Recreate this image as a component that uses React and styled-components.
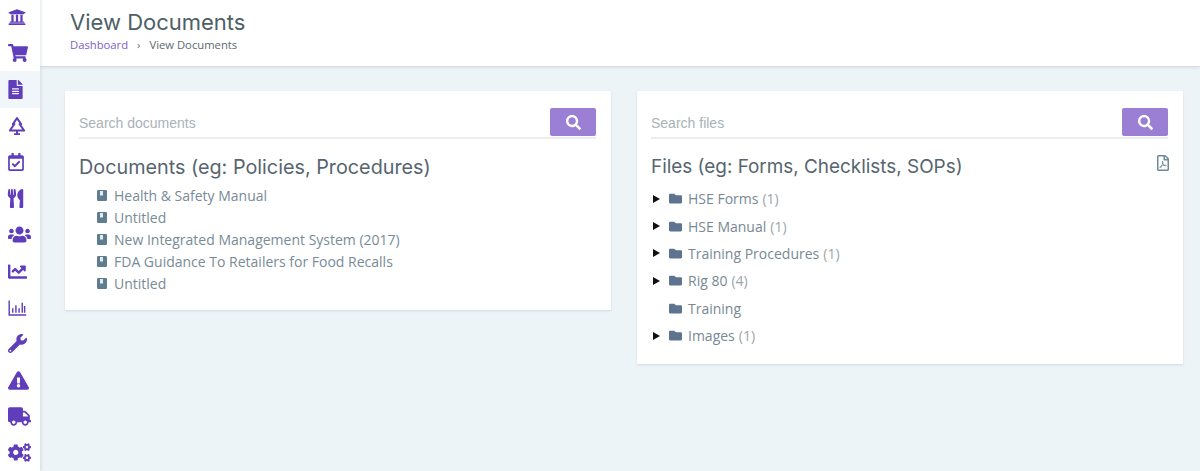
import React from 'react';
import styled, { createGlobalStyle } from 'styled-components';
import {
  FaUniversity, FaShoppingCart, FaFileAlt, FaRegCalendarCheck, FaUtensils, FaUsers, FaChartLine,
  FaWrench, FaExclamationTriangle, FaTruck, FaCogs, FaSearch, FaFolder, FaRegFilePdf,
} from 'react-icons/fa';

const HEADING_FONT = `Inter, "Open Sans", sans-serif`;
const BODY_FONT = `"Open Sans", "Liberation Sans", sans-serif`;

const TreeIcon = (props) => (
  <svg viewBox="0 0 24 24" width="1em" height="1em" fill="none" stroke="currentColor" strokeWidth="2.6" strokeLinejoin="round" {...props}>
    <path d="M12 1.5 L17.5 9.5 H15.5 L21.5 18 H2.5 L8.5 9.5 H6.5 Z" />
    <path d="M8 22.8 H16 M12 18 V22.8" />
  </svg>
);

const BarsIcon = (props) => (
  <svg viewBox="0 0 24 24" width="1em" height="1em" fill="none" stroke="currentColor" {...props}>
    <path d="M1.5 3 V21.5 H23" strokeWidth="1.8" />
    <path d="M6 18.5 V13 M10 18.5 V9 M14 18.5 V13 M18 18.5 V6 M21 18.5 V10" strokeWidth="1.8" />
  </svg>
);

const BookIcon = (props) => (
  <svg viewBox="0 0 10 11" width="10" height="11" {...props}>
    <rect x="0" y="0" width="10" height="11" rx="1.2" fill="currentColor" />
    <rect x="3" y="1" width="3" height="4.5" fill="#e4ebef" />
  </svg>
);

const navItems = [
  { icon: FaUniversity, size: 18 },
  { icon: FaShoppingCart, size: 20 },
  { icon: FaFileAlt, size: 19, offset: -2, active: true },
  { icon: TreeIcon, size: 18 },
  { icon: FaRegCalendarCheck, size: 18, offset: -1 },
  { icon: FaUtensils, size: 19, offset: -2 },
  { icon: FaUsers, size: 23 },
  { icon: FaChartLine, size: 19 },
  { icon: BarsIcon, size: 19 },
  { icon: FaWrench, size: 19 },
  { icon: FaExclamationTriangle, size: 21 },
  { icon: FaTruck, size: 23 },
  { icon: FaCogs, size: 23 },
];

const documents = [
  'Health & Safety Manual',
  'Untitled',
  'New Integrated Management System (2017)',
  'FDA Guidance To Retailers for Food Recalls',
  'Untitled',
];

const files = [
  { name: 'HSE Forms', count: 1 },
  { name: 'HSE Manual', count: 1 },
  { name: 'Training Procedures', count: 1 },
  { name: 'Rig 80', count: 4 },
  { name: 'Training' },
  { name: 'Images', count: 1 },
];

const App = () => {
  return (
    <>
      <GlobalStyle />
      <Page>
        <Sidebar>
          {navItems.map(({ icon: Icon, size, offset, active }, idx) => (
            <NavItem key={idx} $active={active} $size={size} $offset={offset}>
              <Icon />
            </NavItem>
          ))}
        </Sidebar>
        <Main>
          <Header>
            <Title>View Documents</Title>
            <Breadcrumb>
              <CrumbLink>Dashboard</CrumbLink>
              <CrumbSep>›</CrumbSep>
              <span>View Documents</span>
            </Breadcrumb>
          </Header>
          <Content>
            <Card>
              <SearchRow>
                <SearchInput placeholder="Search documents" />
                <SearchButton><FaSearch /></SearchButton>
              </SearchRow>
              <CardTitle $size={19.8}>Documents (eg: Policies, Procedures)</CardTitle>
              <DocList>
                {documents.map((doc, idx) => (
                  <DocRow key={idx}>
                    <BookIcon />
                    {doc}
                  </DocRow>
                ))}
              </DocList>
            </Card>
            <Card>
              <SearchRow>
                <SearchInput placeholder="Search files" />
                <SearchButton><FaSearch /></SearchButton>
              </SearchRow>
              <TitleRow>
                <CardTitle $size={18.9}>Files (eg: Forms, Checklists, SOPs)</CardTitle>
                <PdfLink><FaRegFilePdf /></PdfLink>
              </TitleRow>
              <FileList>
                {files.map((file) => (
                  <FileRow key={file.name}>
                    <Arrow $hidden={file.count === undefined} />
                    <FaFolder />
                    {file.name}
                    {file.count !== undefined && <Count>({file.count})</Count>}
                  </FileRow>
                ))}
              </FileList>
            </Card>
          </Content>
        </Main>
      </Page>
    </>
  );
};

const GlobalStyle = createGlobalStyle`
  * { box-sizing: border-box; }
  html, body { margin: 0; height: 100%; overflow: hidden; }
  body { background: #edf4f8; font-family: ${BODY_FONT}; }
  #root { height: 100%; }
`;

const Page = styled.div`
  display: flex;
  height: 471px;
  overflow: hidden;
`;

const Sidebar = styled.nav`
  width: 40px;
  flex-shrink: 0;
  background: #fff;
  box-shadow: 1px 0 3px rgba(90, 120, 140, 0.2);
  display: flex;
  flex-direction: column;
  margin-top: -1.5px;
  z-index: 2;
`;

const NavItem = styled.div`
  height: 36.35px;
  flex-shrink: 0;
  display: flex;
  align-items: center;
  padding-left: 8px;
  color: #5f3dbb;
  background: ${props => props.$active ? '#f0f6fa' : 'transparent'};
  font-size: ${props => props.$size}px;
  svg { margin-left: ${props => props.$offset || 0}px; }
`;

const Main = styled.div`
  flex: 1;
  min-width: 0;
  display: flex;
  flex-direction: column;
`;

const Header = styled.header`
  height: 66px;
  background: #fff;
  box-shadow: 0 1px 3px rgba(90, 120, 140, 0.25);
  padding: 10px 30px 0;
`;

const Title = styled.h1`
  margin: 0;
  font-family: ${HEADING_FONT};
  font-weight: 400;
  font-size: 22px;
  line-height: 24px;
  color: #4d6066;
`;

const Breadcrumb = styled.div`
  display: flex;
  align-items: center;
  margin-top: 3px;
  font-size: 11.25px;
  line-height: 16px;
  color: #5c6b70;
`;

const CrumbLink = styled.span`
  color: #7d62c6;
`;

const CrumbSep = styled.span`
  margin: 0 9px;
`;

const Content = styled.div`
  display: grid;
  grid-template-columns: 546px 546px;
  gap: 26px;
  align-items: start;
  padding: 25px 0 0 25px;
`;

const Card = styled.section`
  background: #fff;
  padding: 17px 15px 15px 14px;
  box-shadow: 0 1px 2px rgba(110, 140, 160, 0.25);
`;

const SearchRow = styled.div`
  display: flex;
  align-items: flex-end;
  justify-content: space-between;
  height: 31px;
  border-bottom: 2px solid #e9edef;
`;

const SearchInput = styled.input`
  flex: 1;
  border: none;
  outline: none;
  background: transparent;
  font-family: "Liberation Sans", Arial, sans-serif;
  font-size: 14px;
  height: 28px;
  padding: 0;
  &::placeholder { color: #a9b2b8; opacity: 1; }
`;

const SearchButton = styled.button`
  width: 46px;
  height: 28px;
  margin-bottom: 1px;
  border: none;
  border-radius: 2px;
  background: #9b7fd4;
  color: #fff;
  font-size: 15px;
  display: flex;
  align-items: center;
  justify-content: center;
  padding: 0;
`;

const TitleRow = styled.div`
  display: flex;
  justify-content: space-between;
  align-items: flex-start;
`;

const CardTitle = styled.h2`
  margin: 13.5px 0 0;
  font-family: ${HEADING_FONT};
  font-weight: 400;
  font-size: ${props => props.$size}px;
  line-height: 28px;
  color: #56656f;
`;

const PdfLink = styled.span`
  margin-top: 16px;
  margin-right: -3px;
  color: #6f8a96;
  font-size: 16px;
  display: flex;
`;

const DocList = styled.div`
  margin-top: 4px;
  padding-left: 18px;
`;

const DocRow = styled.div`
  display: flex;
  align-items: center;
  gap: 7px;
  height: 22px;
  font-size: 14px;
  color: #788b96;
  svg { color: #5f7d8e; }
`;

const FileList = styled.div`
  margin-top: 4.5px;
`;

const FileRow = styled.div`
  display: flex;
  align-items: center;
  height: 27.4px;
  font-size: 14px;
  color: #788894;
  svg { width: 13px; height: 13px; color: #5d7390; margin-right: 6px; }
`;

const Arrow = styled.span`
  width: 7px;
  height: 8px;
  margin: 0 9px 0 2px;
  border-left: 7px solid #111;
  border-top: 4px solid transparent;
  border-bottom: 4px solid transparent;
  visibility: ${props => props.$hidden ? 'hidden' : 'visible'};
`;

const Count = styled.span`
  margin-left: 4px;
  color: #9aa5ab;
`;

export default App;
